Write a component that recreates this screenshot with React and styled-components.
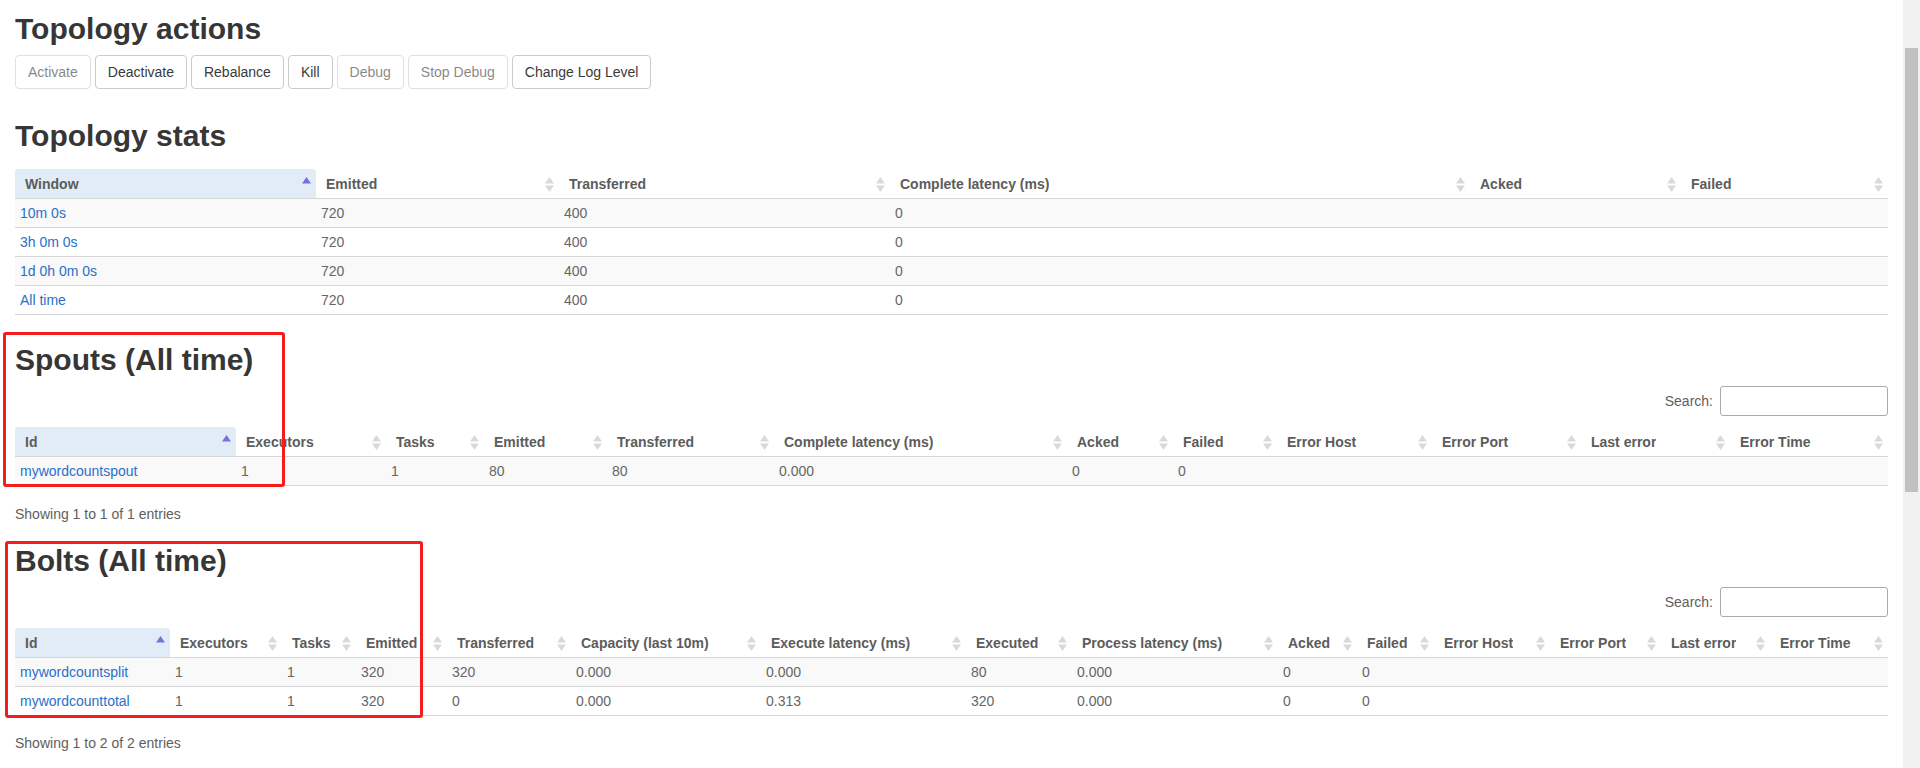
import React from "react";
import styled, { createGlobalStyle } from "styled-components";

const GlobalStyle = createGlobalStyle`
  html, body {
    margin: 0;
    padding: 0;
    height: 100%;
    overflow: hidden;
    background: #fff;
  }
  body {
    font-family: "Liberation Sans", Arial, Helvetica, sans-serif;
    font-size: 14px;
    line-height: 20px;
    color: #555;
  }
  * { box-sizing: border-box; }
`;

const Shell = styled.div`
  display: flex;
  width: 100vw;
  height: 100vh;
  overflow: hidden;
`;

const Page = styled.main`
  flex: 1;
  min-width: 0;
  padding: 12px 15px 0 15px;
`;

const ScrollTrack = styled.div`
  width: 17px;
  flex: none;
  background: #f1f1f1;
  display: flex;
  flex-direction: column;
  align-items: center;
  padding-top: 48px;
`;

const ScrollThumb = styled.div`
  width: 13px;
  height: 444px;
  background: #c1c1c1;
`;

const Heading = styled.h2`
  margin: ${(p) => p.$top || 0}px 0 0 0;
  font-size: 30px;
  line-height: 33px;
  font-weight: 700;
  color: #363636;
`;

const ButtonBar = styled.div`
  display: flex;
  gap: 4px;
  margin-top: 10px;
`;

const ActionButton = styled.button`
  font-family: inherit;
  font-size: 14px;
  line-height: 20px;
  padding: 6px 12px;
  height: 34px;
  color: #3a3a3a;
  background: #fff;
  border: 1px solid #ccc;
  border-radius: 4px;
  opacity: ${(p) => (p.disabled ? 0.6 : 1)};
  cursor: ${(p) => (p.disabled ? "not-allowed" : "pointer")};
`;

const Section = styled.section`
  position: relative;
  margin-top: ${(p) => p.$top}px;
`;

const Highlight = styled.div`
  position: absolute;
  top: ${(p) => p.$y}px;
  left: ${(p) => p.$x}px;
  width: ${(p) => p.$w}px;
  height: ${(p) => p.$h}px;
  border: 3px solid #f51c1c;
  border-radius: 3px;
  pointer-events: none;
`;

const Toolbar = styled.div`
  display: flex;
  justify-content: flex-end;
  align-items: center;
  margin-top: 10px;
`;

const SearchLabel = styled.label`
  display: flex;
  align-items: center;
  color: #5e5e5e;
  font-weight: 400;
`;

const SearchInput = styled.input`
  margin-left: 7px;
  width: 168px;
  height: 30px;
  border: 1px solid #aaa;
  border-radius: 3px;
  background: #fff;
  font-family: inherit;
  font-size: 14px;
  padding: 0 5px;
`;

const Table = styled.table`
  width: 100%;
  table-layout: fixed;
  border-collapse: separate;
  border-spacing: 0;
  margin-top: ${(p) => p.$top || 0}px;
`;

const Col = styled.col`
  width: ${(p) => p.$w}px;
`;

const HeadCell = styled.th`
  text-align: left;
  font-weight: 700;
  color: #5c5c5c;
  padding: 5px 5px 4px 10px;
  line-height: 20px;
  border-bottom: 1px solid #d6d6d6;
  background: ${(p) => (p.$sorted ? "#e1ecf7" : "transparent")};
  border-radius: ${(p) => (p.$sorted ? "3px 3px 0 0" : "0")};
  white-space: nowrap;
`;

const HeadInner = styled.div`
  display: flex;
  align-items: center;
  justify-content: space-between;
`;

const HeadLabel = styled.span`
  overflow: hidden;
`;

const Row = styled.tr`
  background: ${(p) => (p.$striped ? "#f9f9f9" : "#fff")};
`;

const Cell = styled.td`
  padding: 4px 5px;
  line-height: 20px;
  border-bottom: 1px solid #d6d6d6;
  color: #666;
  white-space: nowrap;
  overflow: hidden;
`;

const Link = styled.a`
  color: #2a6fc9;
  text-decoration: none;
`;

const Info = styled.div`
  margin-top: ${(p) => p.$top}px;
  line-height: 20px;
  color: #5e5e5e;
`;

function SortIcon({ dir }) {
  return (
    <svg width="9" height="15" viewBox="0 0 9 15" style={{ flex: "none" }}>
      <polygon
        points="4.5,0 9,6.5 0,6.5"
        fill={dir === "asc" ? "#7373d9" : "#d9d9d9"}
      />
      {dir !== "asc" && <polygon points="0,8.5 9,8.5 4.5,15" fill="#d9d9d9" />}
    </svg>
  );
}

function DataTable({ columns, rows, top }) {
  return (
    <Table $top={top}>
      <colgroup>
        {columns.map((c) => (
          <Col key={c.label} $w={c.w} />
        ))}
      </colgroup>
      <thead>
        <tr>
          {columns.map((c) => (
            <HeadCell key={c.label} $sorted={c.sorted}>
              <HeadInner>
                <HeadLabel>{c.label}</HeadLabel>
                <SortIcon dir={c.sorted ? "asc" : "both"} />
              </HeadInner>
            </HeadCell>
          ))}
        </tr>
      </thead>
      <tbody>
        {rows.map((r, i) => (
          <Row key={i} $striped={i % 2 === 0}>
            {r.map((v, j) => (
              <Cell key={j}>{j === 0 ? <Link href="#">{v}</Link> : v}</Cell>
            ))}
          </Row>
        ))}
      </tbody>
    </Table>
  );
}

const actions = [
  { label: "Activate", disabled: true },
  { label: "Deactivate" },
  { label: "Rebalance" },
  { label: "Kill" },
  { label: "Debug", disabled: true },
  { label: "Stop Debug", disabled: true },
  { label: "Change Log Level" },
];

const statsCols = [
  { label: "Window", w: 301, sorted: true },
  { label: "Emitted", w: 243 },
  { label: "Transferred", w: 331 },
  { label: "Complete latency (ms)", w: 580 },
  { label: "Acked", w: 211 },
  { label: "Failed", w: 207 },
];

const statsRows = [
  ["10m 0s", "720", "400", "0", "", ""],
  ["3h 0m 0s", "720", "400", "0", "", ""],
  ["1d 0h 0m 0s", "720", "400", "0", "", ""],
  ["All time", "720", "400", "0", "", ""],
];

const spoutCols = [
  { label: "Id", w: 221, sorted: true },
  { label: "Executors", w: 150 },
  { label: "Tasks", w: 98 },
  { label: "Emitted", w: 123 },
  { label: "Transferred", w: 167 },
  { label: "Complete latency (ms)", w: 293 },
  { label: "Acked", w: 106 },
  { label: "Failed", w: 104 },
  { label: "Error Host", w: 155 },
  { label: "Error Port", w: 149 },
  { label: "Last error", w: 149 },
  { label: "Error Time", w: 158 },
];

const spoutRows = [
  ["mywordcountspout", "1", "1", "80", "80", "0.000", "0", "0", "", "", "", ""],
];

const boltCols = [
  { label: "Id", w: 155, sorted: true },
  { label: "Executors", w: 112 },
  { label: "Tasks", w: 74 },
  { label: "Emitted", w: 91 },
  { label: "Transferred", w: 124 },
  { label: "Capacity (last 10m)", w: 190 },
  { label: "Execute latency (ms)", w: 205 },
  { label: "Executed", w: 106 },
  { label: "Process latency (ms)", w: 206 },
  { label: "Acked", w: 79 },
  { label: "Failed", w: 77 },
  { label: "Error Host", w: 116 },
  { label: "Error Port", w: 111 },
  { label: "Last error", w: 109 },
  { label: "Error Time", w: 118 },
];

const boltRows = [
  ["mywordcountsplit", "1", "1", "320", "320", "0.000", "0.000", "80", "0.000", "0", "0", "", "", "", ""],
  ["mywordcounttotal", "1", "1", "320", "0", "0.000", "0.313", "320", "0.000", "0", "0", "", "", "", ""],
];

export default function App() {
  return (
    <>
      <GlobalStyle />
      <Shell>
        <Page>
          <Heading>Topology actions</Heading>
          <ButtonBar>
            {actions.map((a) => (
              <ActionButton key={a.label} disabled={a.disabled}>
                {a.label}
              </ActionButton>
            ))}
          </ButtonBar>

          <Heading $top={30}>Topology stats</Heading>
          <DataTable columns={statsCols} rows={statsRows} top={17} />

          <Section $top={28}>
            <Highlight $x={-12} $y={-11} $w={282} $h={155} />
            <Heading>Spouts (All time)</Heading>
            <Toolbar>
              <SearchLabel>
                Search:
                <SearchInput type="search" />
              </SearchLabel>
            </Toolbar>
            <DataTable columns={spoutCols} rows={spoutRows} top={11} />
          </Section>
          <Info $top={18}>Showing 1 to 1 of 1 entries</Info>

          <Section $top={20}>
            <Highlight $x={-10} $y={-3} $w={418} $h={177} />
            <Heading>Bolts (All time)</Heading>
            <Toolbar>
              <SearchLabel>
                Search:
                <SearchInput type="search" />
              </SearchLabel>
            </Toolbar>
            <DataTable columns={boltCols} rows={boltRows} top={11} />
          </Section>
          <Info $top={17}>Showing 1 to 2 of 2 entries</Info>
        </Page>
        <ScrollTrack>
          <ScrollThumb />
        </ScrollTrack>
      </Shell>
    </>
  );
}
